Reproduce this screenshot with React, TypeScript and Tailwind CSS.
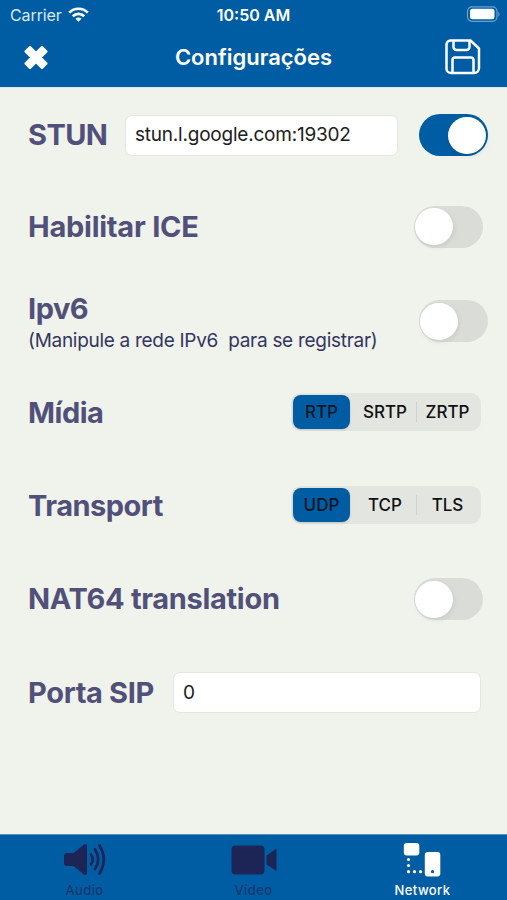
import { useState } from 'react';
import type { ReactNode } from 'react';

function Toggle({ value = false }: { value?: boolean }) {
  const [on, setOn] = useState(value);
  return (
    <button
      role="switch"
      aria-checked={on}
      onClick={() => setOn(!on)}
      className={`flex h-[42px] w-[69px] shrink-0 items-center rounded-full ${on ? 'justify-end bg-[#015da3] px-[2px]' : 'justify-start bg-[#dadcd8] px-px'}`}
    >
      <span className="h-[37px] w-[38px] rounded-full bg-white shadow-[1px_2px_5px_rgba(0,0,0,0.08)]" />
    </button>
  );
}

function Segmented({ options }: { options: string[] }) {
  const [active, setActive] = useState(0);
  return (
    <div className="mr-[26px] grid h-[38px] w-[190px] shrink-0 grid-cols-[61px_62px_63px] items-center rounded-[10px] bg-[#e3e5e0] p-[2px] text-[17px] font-medium text-[#111]">
      {options.map((o, i) => (
        <div key={o} className="flex items-center">
          {i > 0 && <span className={`-mr-px h-5 w-px ${i === active || i - 1 === active ? 'bg-transparent' : 'bg-[#d0d2ce]'}`} />}
          <button
            onClick={() => setActive(i)}
            className={`h-[34px] w-full rounded-[8px] pt-[2px] ${i === active ? 'mr-[4px] bg-[#015da3] text-[#061725] shadow-sm' : ''}`}
          >
            {o}
          </button>
        </div>
      ))}
    </div>
  );
}

function Row({ height, children }: { height: string; children: ReactNode }) {
  return <div className={`flex items-center justify-between pl-7 ${height}`}>{children}</div>;
}

function Label({ children, className = '' }: { children: ReactNode; className?: string }) {
  return <span className={`text-[29px] leading-9 font-bold whitespace-nowrap text-[#51507a] ${className}`}>{children}</span>;
}

function Header() {
  return (
    <header className="h-[87px] bg-[#015da3] text-white">
      <div className="grid h-[29px] grid-cols-3 items-center">
        <div className="flex items-center gap-[6px] pl-[10px] text-[16px] tracking-[-0.1px] text-[#d9eaf6]">
          Carrier
          <svg width="21" height="16" viewBox="0 0 21 16" fill="none" stroke="#fff" strokeWidth="2.7">
            <path d="M1.2 5.6a13.2 13.2 0 0 1 18.6 0" />
            <path d="M4.8 9.3a8.1 8.1 0 0 1 11.4 0" />
            <path d="M10.5 14.7 7.5 11.7a4.2 4.2 0 0 1 6 0Z" fill="#fff" stroke="none" />
          </svg>
        </div>
        <div className="text-center text-[16px] font-semibold">10:50 AM</div>
        <div className="flex justify-end pr-[7px]">
          <svg width="34" height="17" viewBox="0 0 34 17">
            <rect x="1.5" y="0.8" width="29.5" height="14.5" rx="4.5" fill="none" stroke="#6da2cb" strokeWidth="1.2" />
            <rect x="4" y="2.8" width="24.5" height="10.5" rx="2.5" fill="#fff" />
            <path d="M32.3 5.8v5c1.5-.5 1.5-4.5 0-5Z" fill="#6da2cb" />
          </svg>
        </div>
      </div>
      <div className="grid h-[57px] grid-cols-[80px_1fr_80px] items-center">
        <button aria-label="Fechar" className="pb-px pl-6">
          <svg width="25" height="25" viewBox="0 0 25 25" fill="#fff" stroke="#fff" strokeWidth="3" strokeLinejoin="round">
            <path d="m6 2.5 6 6 6-6 4 4-6 6 6 6-4 4-6-6-6 6-4-4 6-6-6-6Z" />
          </svg>
        </button>
        <h1 className="text-center text-[22px] font-semibold">Configurações</h1>
        <button aria-label="Salvar" className="flex justify-end pr-[26px] pb-px">
          <svg width="36" height="36" viewBox="0 0 36 36" fill="none" stroke="#fff" strokeWidth="2.5" strokeLinejoin="round">
            <path d="M5.500 1.500h20l8.500 8v19.500a5 5 0 0 1-5 5H6a4.500 4.500 0 0 1-4.500-4.500v-24a4 4 0 0 1 4-4Z" />
            <path d="M8.500 1.500v6.500a3 3 0 0 0 3 3h10a3 3 0 0 0 3-3V1.500" />
            <path d="M7.500 34V21a2.500 2.500 0 0 1 2.500-2.500h16a2.500 2.500 0 0 1 2.500 2.500v13" />
          </svg>
        </button>
      </div>
    </header>
  );
}

function TabBar() {
  return (
    <nav className="grid h-[66px] grid-cols-3 border-t border-[#5790bb] bg-[#015da3] text-[13px] font-medium">
      <button className="flex flex-col items-center pt-[4px] text-[#12396f]">
        <svg width="46" height="40" viewBox="0 0 46 40" fill="#1d2557">
          <path d="M5 14h6.500L22 5.500q3-1.500 3 1.500v27q0 3-3 1.500l-10.500-8.500H5q-3 0-3-3V17q0-3 3-3Z" />
          <g fill="none" stroke="#1d2557" strokeWidth="2.7" strokeLinecap="round">
            <path d="M29 15.500q3.500 5 0 10" />
            <path d="M33 10.500q6.500 10 0 19.500" />
            <path d="M37.500 6.500q8.500 14 0 28" />
          </g>
        </svg>
        <span className="leading-[22px] tracking-[0.4px]">Audio</span>
      </button>
      <button className="flex flex-col items-center pt-[4px] text-[#12396f]">
        <svg width="46" height="40" viewBox="0 0 46 40" fill="#1d2557">
          <rect x="0.5" y="6.5" width="33" height="29" rx="4" />
          <path d="m35.500 16.500 10-7v22.500l-10-6.500Z" />
        </svg>
        <span className="leading-[22px] tracking-[0.4px]">Vídeo</span>
      </button>
      <button className="flex flex-col items-center pt-[4px] text-white">
        <svg width="40" height="40" viewBox="0 0 40 40" fill="#fff">
          <rect x="0.8" y="4" width="15.5" height="12.5" rx="3" />
          <rect x="21.8" y="13" width="15.5" height="24.5" rx="3" />
          <circle cx="29.5" cy="32.7" r="1.6" fill="#015da3" />
          <circle cx="5.5" cy="20.5" r="1.6" />
          <circle cx="5.5" cy="26.5" r="1.6" />
          <circle cx="5.5" cy="32.7" r="1.6" />
          <circle cx="11.5" cy="32.7" r="1.6" />
          <circle cx="17.5" cy="32.7" r="1.6" />
        </svg>
        <span className="leading-[22px] tracking-[0.4px]">Network</span>
      </button>
    </nav>
  );
}

export default function App() {
  return (
    <div className="flex h-[900px] w-[507px] flex-col overflow-hidden bg-[#eff3eb] font-[Inter,sans-serif]">
      <Header />
      <main className="flex-1 border-t border-[#dce5e7]">
        <Row height="h-[94px]">
          <Label className="tracking-[-0.6px]">STUN</Label>
          <div className="flex items-center gap-[21px] pr-[19px]">
            <input defaultValue="stun.l.google.com:19302" className="h-[41px] w-[273px] rounded-[7px] border border-[#e5e7e2] bg-white px-[9px] pb-px text-[19px] tracking-[-0.22px] text-[#202020] outline-none" />
            <Toggle value />
          </div>
        </Row>
        <Row height="h-[89px]">
          <Label className="tracking-[-0.25px]">Habilitar ICE</Label>
          <div className="pr-6"><Toggle /></div>
        </Row>
        <Row height="h-[100px]">
          <div className="flex flex-col pt-[3px]">
            <Label className="tracking-[-0.5px]">Ipv6</Label>
            <span className="text-[19px] leading-[27px] tracking-[-0.29px] whitespace-pre text-[#34365f]">(Manipule a rede IPv6  para se registrar)</span>
          </div>
          <div className="pr-[19px]"><Toggle /></div>
        </Row>
        <Row height="h-[81px]">
          <Label className="pt-[2px] tracking-[-0.5px]">Mídia</Label>
          <Segmented options={['RTP', 'SRTP', 'ZRTP']} />
        </Row>
        <Row height="h-[105px]">
          <Label className="pt-[2px] tracking-[-0.5px]">Transport</Label>
          <Segmented options={['UDP', 'TCP', 'TLS']} />
        </Row>
        <Row height="h-[84px]">
          <Label className="tracking-[-0.32px]">NAT64 translation</Label>
          <div className="pr-6"><Toggle /></div>
        </Row>
        <Row height="h-[102px]">
          <Label className="pt-px tracking-[-0.35px]">Porta SIP</Label>
          <input defaultValue="0" className="mr-[26px] h-[41px] w-[308px] rounded-[7px] border border-[#e5e7e2] bg-white px-[9px] text-[19px] text-[#202020] outline-none" />
        </Row>
      </main>
      <TabBar />
    </div>
  );
}
